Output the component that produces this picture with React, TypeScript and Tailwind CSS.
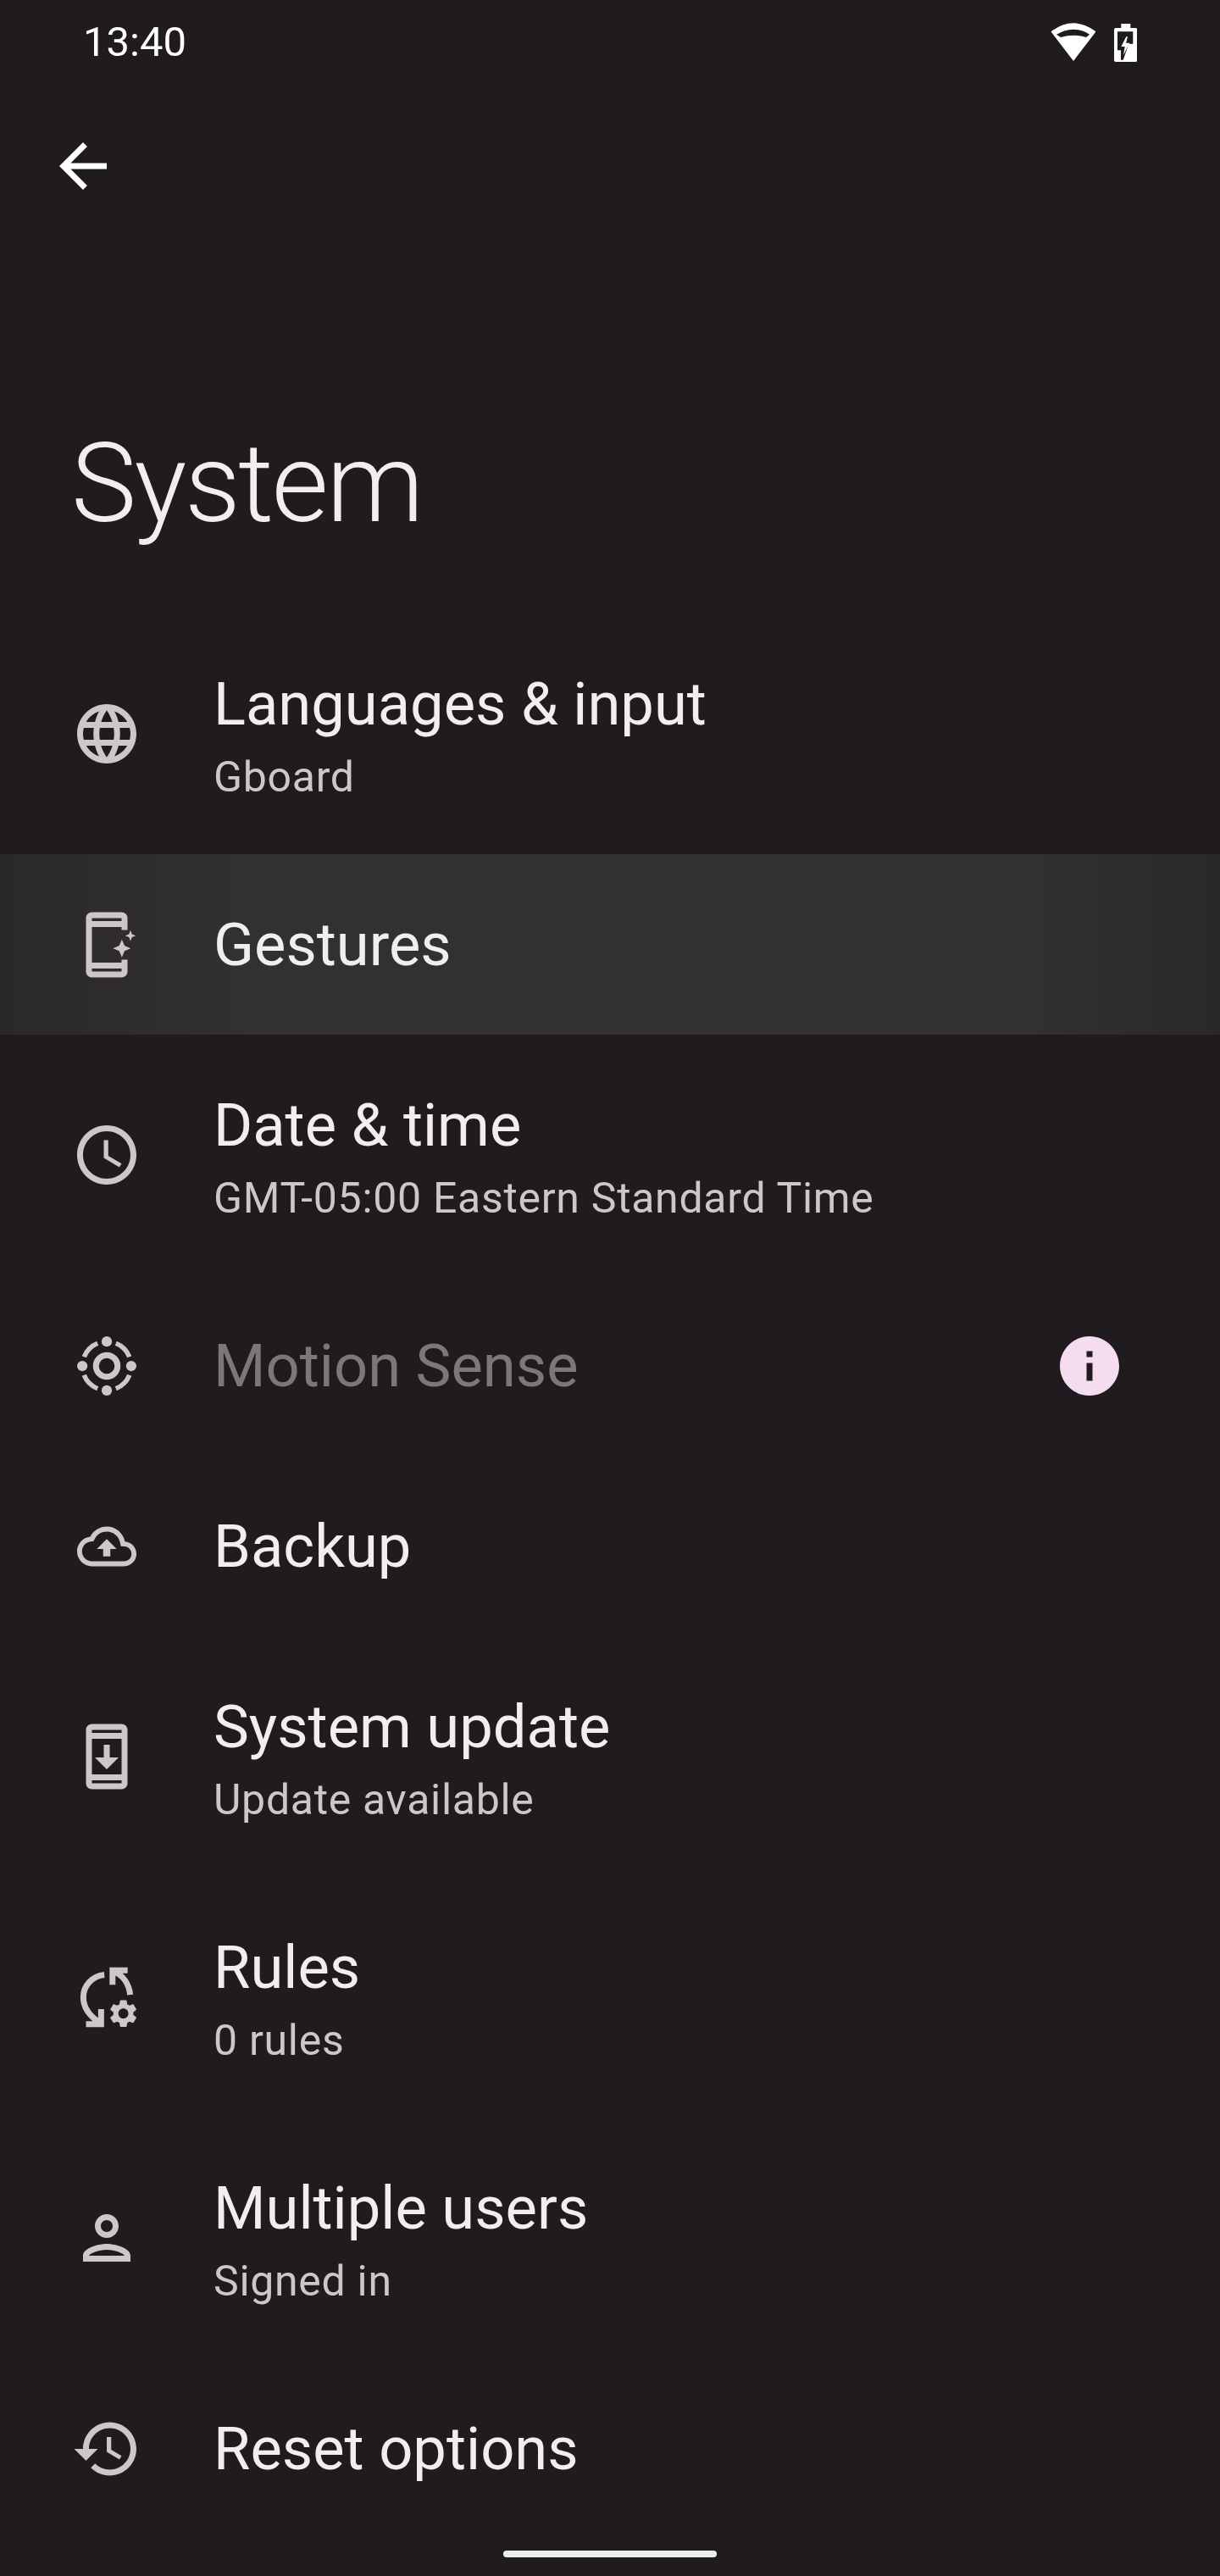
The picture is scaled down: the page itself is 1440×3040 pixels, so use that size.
import type { ReactNode } from 'react';

const Icon = ({ children }: { children: ReactNode }) => (
  <svg viewBox="0 0 24 24" className="h-[84px] w-[84px] shrink-0 fill-[#cfc6cc]">
    {children}
  </svg>
);

const phoneBands =
  'M17 1.01L7 1c-1.1 0-2 .9-2 2v18c0 1.1.9 2 2 2h10c1.1 0 2-.9 2-2V3c0-1.1-.9-1.99-2-1.99zM17 21H7v-1h10v1zm0-3H7V6h10v12zM7 4V3h10v1H7z';

const GlobeIcon = () => (
  <Icon>
    <path d="M11.99 2C6.47 2 2 6.48 2 12s4.47 10 9.99 10C17.52 22 22 17.52 22 12S17.52 2 11.99 2zm6.93 6h-2.95c-.32-1.25-.78-2.45-1.38-3.56 1.84.63 3.37 1.91 4.33 3.56zM12 4.04c.83 1.2 1.48 2.53 1.91 3.96h-3.82c.43-1.43 1.08-2.76 1.91-3.96zM4.26 14C4.1 13.36 4 12.69 4 12s.1-1.36.26-2h3.38c-.08.66-.14 1.32-.14 2s.06 1.34.14 2H4.26zm.82 2h2.95c.32 1.25.78 2.45 1.38 3.56-1.84-.63-3.37-1.9-4.33-3.56zm2.95-8H5.08c.96-1.66 2.49-2.93 4.33-3.56C8.81 5.55 8.35 6.75 8.03 8zM12 19.96c-.83-1.2-1.48-2.53-1.91-3.96h3.82c-.43 1.43-1.08 2.76-1.91 3.96zM14.34 14H9.66c-.09-.66-.16-1.32-.16-2s.07-1.35.16-2h4.68c.09.65.16 1.32.16 2s-.07 1.34-.16 2zm.25 5.56c.6-1.11 1.06-2.31 1.38-3.56h2.95c-.96 1.65-2.49 2.93-4.33 3.56zM16.36 14c.08-.66.14-1.32.14-2s-.06-1.34-.14-2h3.38c.16.64.26 1.31.26 2s-.1 1.36-.26 2h-3.38z" />
  </Icon>
);

const GesturesIcon = () => (
  <Icon>
    <path d="M7 1C5.9 1 5 1.9 5 3v18c0 1.1.9 2 2 2h10c1.1 0 2-.9 2-2v-4h-2v1H7V6h10v1h2V3c0-1.1-.9-2-2-2H7zm0 2h10v1H7V3zm0 17h10v1H7v-1z" />
    <path d="M17.1 10.2l.9 2.1 2.1.9-2.1.9-.9 2.1-.9-2.1-2.1-.9 2.1-.9z" />
    <path d="M20 7.1l.5 1.3 1.3.5-1.3.5-.5 1.3-.5-1.3-1.3-.5 1.3-.5z" />
  </Icon>
);

const ClockIcon = () => (
  <Icon>
    <path d="M11.99 2C6.47 2 2 6.48 2 12s4.47 10 9.99 10C17.52 22 22 17.52 22 12S17.52 2 11.99 2zM12 20c-4.42 0-8-3.58-8-8s3.58-8 8-8 8 3.58 8 8-3.58 8-8 8z" />
    <path d="M12.5 7H11v6l5.25 3.15.75-1.23-4.5-2.67z" />
  </Icon>
);

const MotionIcon = () => (
  <Icon>
    <circle cx="12" cy="3.75" r="1.75" />
    <circle cx="12" cy="20.25" r="1.75" />
    <circle cx="3.75" cy="12" r="1.75" />
    <circle cx="20.25" cy="12" r="1.75" />
    <circle cx="12" cy="12" r="3.65" fill="none" stroke="#cfc6cc" strokeWidth="2" />
    <path
      d="M15.09 4.35A8.25 8.25 0 0 1 19.65 8.91M19.65 15.09A8.25 8.25 0 0 1 15.09 19.65M8.91 19.65A8.25 8.25 0 0 1 4.35 15.09M4.35 8.91A8.25 8.25 0 0 1 8.91 4.35"
      fill="none"
      stroke="#cfc6cc"
      strokeWidth="1.6"
    />
  </Icon>
);

const BackupIcon = () => (
  <Icon>
    <path
      transform="translate(12 12) scale(.835) translate(-12 -12)"
      d="M19.35 10.04C18.67 6.59 15.64 4 12 4 9.11 4 6.6 5.64 5.35 8.04 2.34 8.36 0 10.91 0 14c0 3.31 2.69 6 6 6h13c2.76 0 5-2.24 5-5 0-2.64-2.05-4.78-4.65-4.96zM19 18H6c-2.21 0-4-1.79-4-4 0-2.05 1.53-3.76 3.56-3.97l1.07-.11.5-.95C8.08 7.14 9.94 6 12 6c2.62 0 4.88 1.86 5.39 4.43l.3 1.5 1.53.11c1.56.1 2.78 1.41 2.78 2.96 0 1.65-1.35 3-3 3zM8 13h2.55v3h2.9v-3H16l-4-4z"
    />
  </Icon>
);

const UpdateIcon = () => (
  <Icon>
    <path d={phoneBands} />
    <path d="M16 12.3l-4 4-4-4h3V8h2v4.3h3z" />
  </Icon>
);

const RulesIcon = () => (
  <Icon>
    <path
      d="M11.2 4.4C7.2 4.8 4.1 8 4.1 12c0 3.4 2.2 6.4 5.6 8.6M10.1 16v5.1H5M14.2 3.2c3.3 1.3 5.3 4.3 5.7 8M13.95 7.8V2.9h5.1"
      fill="none"
      stroke="#cfc6cc"
      strokeWidth="2"
    />
    <path
      transform="translate(17.6 17.5) scale(.47) translate(-12 -12)"
      d="M19.14 12.94c.04-.3.06-.61.06-.94 0-.32-.02-.64-.07-.94l2.03-1.58c.18-.14.23-.41.12-.61l-1.92-3.32c-.12-.22-.37-.29-.59-.22l-2.39.96c-.5-.38-1.03-.7-1.62-.94l-.36-2.54c-.04-.24-.24-.41-.48-.41h-3.84c-.24 0-.43.17-.47.41l-.36 2.54c-.59.24-1.13.57-1.62.94l-2.39-.96c-.22-.08-.47 0-.59.22L2.74 8.87c-.12.21-.08.47.12.61l2.03 1.58c-.05.3-.09.63-.09.94s.02.64.07.94l-2.03 1.58c-.18.14-.23.41-.12.61l1.92 3.32c.12.22.37.29.59.22l2.39-.96c.5.38 1.03.7 1.62.94l.36 2.54c.05.24.24.41.48.41h3.84c.24 0 .44-.17.47-.41l.36-2.54c.59-.24 1.13-.56 1.62-.94l2.39.96c.22.08.47 0 .59-.22l1.92-3.32c.12-.22.07-.47-.12-.61l-2.01-1.58zM12 15.6c-1.98 0-3.6-1.62-3.6-3.6s1.62-3.6 3.6-3.6 3.6 1.62 3.6 3.6-1.62 3.6-3.6 3.6z"
    />
  </Icon>
);

const PersonIcon = () => (
  <Icon>
    <path d="M12 6c1.1 0 2 .9 2 2s-.9 2-2 2-2-.9-2-2 .9-2 2-2m0 10c2.7 0 5.8 1.29 6 2H6c.23-.72 3.31-2 6-2m0-12C9.79 4 8 5.79 8 8s1.79 4 4 4 4-1.79 4-4-1.79-4-4-4zm0 10c-2.67 0-8 1.34-8 4v2h16v-2c0-2.66-5.33-4-8-4z" />
  </Icon>
);

const HistoryIcon = () => (
  <Icon>
    <path d="M13 3c-4.97 0-9 4.03-9 9H1l3.89 3.89.07.14L9 12H6c0-3.87 3.13-7 7-7s7 3.13 7 7-3.13 7-7 7c-1.93 0-3.68-.79-4.94-2.06l-1.42 1.42C8.27 19.99 10.51 21 13 21c4.97 0 9-4.03 9-9s-4.03-9-9-9zm-1 5v5l4.28 2.54.72-1.21-3.5-2.08V8H12z" />
  </Icon>
);

const InfoIcon = () => (
  <svg viewBox="0 0 24 24" className="h-[84px] w-[84px] shrink-0 fill-[#f6dcef]">
    <path
      fillRule="evenodd"
      d="M12 2C6.48 2 2 6.48 2 12s4.48 10 10 10 10-4.48 10-10S17.52 2 12 2zm-1 5h2v2h-2V7zm0 4h2v6h-2v-6z"
    />
  </svg>
);

const WifiIcon = () => (
  <svg viewBox="0 0 56 50" className="h-[50px] w-14 fill-white">
    <path
      fillRule="evenodd"
      d="M28 47L2 13Q1.5 12 2.5 11.5Q28-7 53.5 11.5Q54.5 12 54 13ZM8 15.7Q28 3.7 47 15.7L43 19Q28 14.4 13 19Z"
    />
  </svg>
);

const BatteryIcon = () => (
  <svg viewBox="0 0 27 45" className="h-[45px] w-[27px]">
    <path className="fill-white" d="M8.3 0h11v5h6a2 2 0 0 1 2 2v36a2 2 0 0 1-2 2H2a2 2 0 0 1-2-2V7a2 2 0 0 1 2-2h6.3z" />
    <path className="fill-[#1f1b1e]" d="M4 9.3h18.3v14.4h-5L10.7 42.7H8V31.3H4z" />
    <path className="fill-white" d="M14.3 15.3L8.3 27h4.4L11 37l7.3-14.3H14l2-7.4z" />
  </svg>
);

type Row = {
  title: string;
  summary?: string;
  icon: ReactNode;
  disabled?: boolean;
  highlighted?: boolean;
  info?: boolean;
};

const rows: Row[] = [
  { title: 'Languages & input', summary: 'Gboard', icon: <GlobeIcon /> },
  { title: 'Gestures', icon: <GesturesIcon />, highlighted: true },
  { title: 'Date & time', summary: 'GMT-05:00 Eastern Standard Time', icon: <ClockIcon /> },
  { title: 'Motion Sense', icon: <MotionIcon />, disabled: true, info: true },
  { title: 'Backup', icon: <BackupIcon /> },
  { title: 'System update', summary: 'Update available', icon: <UpdateIcon /> },
  { title: 'Rules', summary: '0 rules', icon: <RulesIcon /> },
  { title: 'Multiple users', summary: 'Signed in', icon: <PersonIcon /> },
  { title: 'Reset options', icon: <HistoryIcon /> },
];

const SettingsRow = ({ row }: { row: Row }) => (
  <div
    className={`flex items-center pl-[84px] pr-[112px] ${row.summary ? 'h-[284px]' : 'h-[213px]'} ${
      row.highlighted ? 'bg-[linear-gradient(90deg,#2a282a_0%,#323031_20%,#323031_85%,#2a282a_100%)]' : ''
    }`}
  >
    {row.icon}
    <div className={`ml-[84px] flex-1 ${row.summary ? 'pt-[6px]' : ''}`}>
      <div className={`text-[70.5px] leading-[86px] ${row.disabled ? 'text-[#7b787a]' : 'text-[#f1eef0]'}`}>{row.title}</div>
      {row.summary && <div className="mt-[10px] text-[50px] leading-[66px] tracking-[0.7px] text-[#cfc6cc]">{row.summary}</div>}
    </div>
    {row.info && <InfoIcon />}
  </div>
);

export default function App() {
  return (
    <div className="flex h-[3040px] w-[1440px] flex-col overflow-hidden bg-[#1f1b1e] font-['Roboto',sans-serif]">
      {/* Status bar */}
      <div className="flex h-[100px] items-center justify-between pl-[98px] pr-[98px] text-[49px] text-white">
        <span>13:40</span>
        <div className="flex items-center gap-5">
          <WifiIcon />
          <BatteryIcon />
        </div>
      </div>

      {/* Toolbar */}
      <div className="flex pl-14 pt-[54px]">
        <svg viewBox="0 0 24 24" className="h-[84px] w-[84px] fill-white">
          <path d="M20 11H7.83l5.59-5.59L12 4l-8 8 8 8 1.41-1.41L7.83 13H20v-2z" />
        </svg>
      </div>

      <h1 className="ml-[84px] mt-[258px] text-[130px] font-light leading-[150px] tracking-[-2.5px] text-[#f1eef0]">System</h1>

      {/* Rows */}
      <div className="mt-[78px]">
        {rows.map(row => (
          <SettingsRow key={row.title} row={row} />
        ))}
      </div>

      {/* Gesture pill */}
      <div className="mt-[14px] flex justify-center">
        <div className="h-2 w-[252px] rounded-full bg-[#eeeded]" />
      </div>
    </div>
  );
}
